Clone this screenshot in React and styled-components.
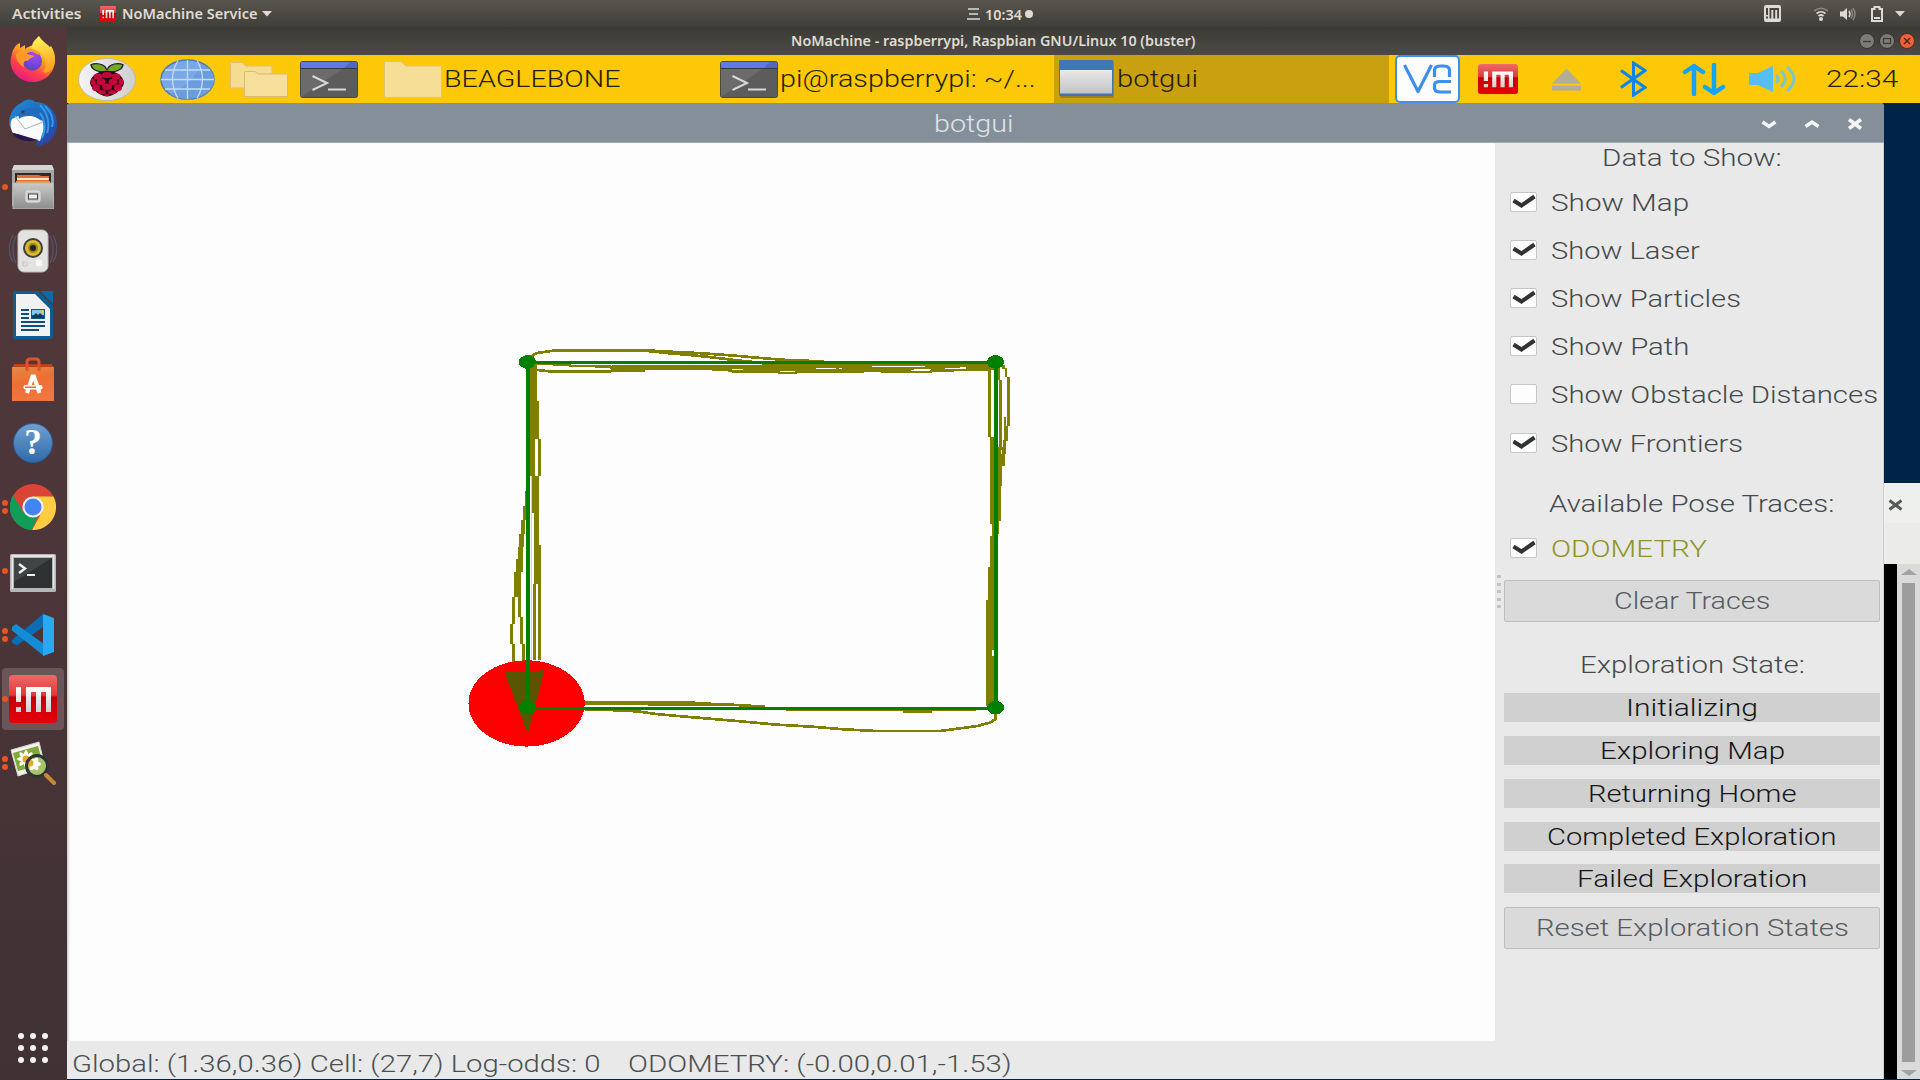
import React, { useLayoutEffect, useRef, useState } from "react";
import styled, { createGlobalStyle } from "styled-components";

const Global = createGlobalStyle`
  html, body { margin: 0; padding: 0; overflow: hidden; background: #00234a; }
  * { box-sizing: border-box; }
  svg { display: block; flex: none; }
`;

/* ---------- text stretched to the width of its slot ---------- */
const Slot = styled.span`
  display: block;
  flex: none;
  width: ${(p) => p.$w}px;
  margin-left: ${(p) => p.$ml || 0}px;
  text-align: left;
`;
const Glyphs = styled.span`
  display: inline-block;
  white-space: pre;
  transform-origin: 0 50%;
`;
function Fit({ w, ml, dy = 0, children }) {
  const ref = useRef(null);
  const [k, setK] = useState(1);
  useLayoutEffect(() => {
    const natural = ref.current.offsetWidth;
    if (natural) setK((w + 2) / natural);
  }, [w, children]);
  return (
    <Slot $w={w} $ml={ml}>
      <Glyphs ref={ref} style={{ transform: `translate(-1px, ${dy}px) scaleX(${k})` }}>{children}</Glyphs>
    </Slot>
  );
}

/* ---------- shell ---------- */
const Screen = styled.div`
  width: 1920px;
  height: 1080px;
  display: flex;
  flex-direction: column;
  overflow: hidden;
  font-family: Roboto, "Noto Sans", sans-serif;
`;
const TopBar = styled.header`
  height: 27px;
  flex: none;
  display: flex;
  align-items: center;
  background: linear-gradient(#59564d, #3f3e39);
  color: #dfdbd2;
  font: 600 14px/26px "Noto Sans", "Open Sans", sans-serif;
`;
const TopGroup = styled.div`
  display: flex;
  align-items: center;
  height: 26px;
  width: ${(p) => (p.$w ? p.$w + "px" : "auto")};
  padding-left: ${(p) => p.$pl || 0}px;
  margin-left: ${(p) => (p.$end ? "auto" : 0)};
  padding-right: ${(p) => (p.$end ? 15 : 0)}px;
`;
const Gap = styled.i`
  flex: none;
  width: ${(p) => p.$w}px;
`;
const Body = styled.div`
  flex: 1;
  display: flex;
  min-height: 0;
`;
const Dock = styled.nav`
  width: 67px;
  flex: none;
  display: flex;
  flex-direction: column;
  background: linear-gradient(#52383a, #4d363a 45%, #3f3134);
`;
const DockItem = styled.div`
  height: 64px;
  flex: none;
  display: flex;
  align-items: center;
`;
const Dots = styled.div`
  width: 8px;
  padding-left: 2px;
  display: flex;
  flex-direction: column;
  gap: 2.4px;
  z-index: 1;
`;
const Dot = styled.i`
  width: 6px;
  height: 6px;
  border-radius: 50%;
  background: #e95420;
`;
const Tile = styled.div`
  width: 62px;
  height: 62px;
  margin-left: -6px;
  border-radius: 4px;
  display: flex;
  align-items: center;
  justify-content: center;
  background: ${(p) => (p.$active ? "#6b5559" : "transparent")};
`;
const AppsGrid = styled.div`
  margin: auto 0 17px 18px;
  display: grid;
  grid-template-columns: repeat(3, 6px);
  gap: 6px;
`;
const AppsDot = styled.i`
  height: 6px;
  border-radius: 50%;
  background: #f4f2f0;
`;
const Remote = styled.div`
  flex: 1;
  display: flex;
  flex-direction: column;
  min-width: 0;
`;
const HostTitle = styled.div`
  height: 28px;
  flex: none;
  display: flex;
  align-items: center;
  padding-left: 725px;
  background: linear-gradient(#3b3a36, #4c4a44);
  color: #dfdbd2;
  font: 600 14px/27px "Noto Sans", "Open Sans", sans-serif;
`;
const HostButtons = styled.div`
  margin-left: auto;
  padding-right: 5px;
  display: flex;
  gap: 4px;
`;

/* ---------- remote desktop ---------- */
const Taskbar = styled.div`
  height: 48px;
  flex: none;
  display: flex;
  align-items: center;
  background: #fcc808;
  color: #241f04;
  font-size: 23.5px;
  line-height: 48px;
`;
const Task = styled.div`
  height: 48px;
  width: ${(p) => p.$w}px;
  flex: none;
  display: flex;
  align-items: center;
  padding-left: ${(p) => p.$pl}px;
  font-weight: 300;
  background: ${(p) => (p.$active ? "#c9a00f" : "transparent")};
`;
const Clock = styled.div`
  font-weight: 300;
`;
const Desktop = styled.div`
  flex: 1;
  display: flex;
  min-height: 0;
  border-bottom: 1px solid #00234a;
`;
const Window = styled.section`
  width: 1817px;
  flex: none;
  display: flex;
  flex-direction: column;
  background: #e9e9e9;
  border-radius: 4px 4px 0 0;
`;
const WindowTitle = styled.div`
  height: 40px;
  flex: none;
  display: flex;
  align-items: center;
  padding-left: 868px;
  padding-right: 21px;
  border-radius: 4px 4px 0 0;
  border-bottom: 1px solid #a3aab1;
  background: #858f99;
  color: #dfe3e7;
  font-size: 23px;
  font-weight: 300;
  line-height: 40px;
`;
const WindowButtons = styled.div`
  margin-left: auto;
  padding-top: 2px;
  display: flex;
  gap: 27px;
`;
const Main = styled.div`
  flex: 1;
  display: flex;
  min-height: 0;
`;
const View = styled.div`
  width: 1428px;
  flex: none;
  display: flex;
  flex-direction: column;
`;
const Canvas = styled.div`
  height: 898px;
  flex: none;
  overflow: hidden;
  background: #fdfdfd;
  box-shadow: inset 3px 0 3px -2px #bbb;
`;
const Status = styled.div`
  flex: 1;
  display: flex;
  padding-left: 6px;
  color: #4a5052;
  font-size: 23px;
  font-weight: 300;
  line-height: 46px;
`;
const Side = styled.aside`
  width: 389px;
  height: 936px;
  display: flex;
  border-right: 1px solid #d0d0d0;
`;
const Grip = styled.div`
  width: 9px;
  padding: 432px 0 0 2px;
  display: flex;
  flex-direction: column;
  gap: 4.5px;
`;
const GripDot = styled.i`
  width: 4px;
  height: 3px;
  background: #c4c4c4;
`;
const Controls = styled.div`
  width: 376px;
  display: flex;
  flex-direction: column;
  color: #43494c;
  font-size: 23px;
  font-weight: 300;
`;
const Heading = styled.div`
  height: 30px;
  flex: none;
  display: flex;
  justify-content: center;
  line-height: 30px;
  margin-top: ${(p) => p.$mt}px;
  margin-bottom: ${(p) => p.$mb}px;
`;
const CheckRow = styled.label`
  height: 48.1px;
  flex: none;
  display: flex;
  align-items: center;
  padding-left: 6px;
  line-height: 48px;
  color: ${(p) => p.$color || "inherit"};
`;
const Box = styled.span`
  width: 27px;
  height: 20px;
  margin-right: 15px;
  border: 1px solid #c6c6c6;
  border-radius: 2px;
  background: #fdfdfd;
`;
const Button = styled.button`
  height: 42px;
  flex: none;
  display: flex;
  justify-content: center;
  padding: 0;
  margin: ${(p) => p.$mt}px 0 0;
  border: 1px solid #bebebe;
  border-radius: 2px;
  background: #dadada;
  color: #555b5e;
  font: inherit;
  line-height: 41px;
`;
const StateList = styled.div`
  display: flex;
  flex-direction: column;
  gap: 13.6px;
`;
const StateBar = styled.div`
  height: 29.2px;
  display: flex;
  justify-content: center;
  background: #d0d0d0;
  color: #141618;
  line-height: 30px;
`;
const Behind = styled.div`
  flex: 1;
  display: flex;
  flex-direction: column;
  background: #00234a;
`;
const BehindTitle = styled.div`
  height: 40px;
  margin-top: 380px;
  flex: none;
  padding: 16px 0 0 4px;
  background: #eef0ee;
`;
const BehindMenu = styled.div`
  height: 41px;
  flex: none;
  background: #ebebea;
`;
const BehindTerm = styled.div`
  flex: 1;
  display: flex;
  justify-content: flex-end;
  background: #000;
`;
const ScrollBar = styled.div`
  width: 23px;
  display: flex;
  flex-direction: column;
  align-items: center;
  padding: 5px 0 3px;
  background: #dadada;
`;
const Thumb = styled.div`
  width: 13px;
  flex: 1;
  margin: 8px 0;
  background: #9d9d9d;
`;

/* ---------- icons ---------- */
const NMLogo = ({ w, h }) => (
  <svg width={w} height={h} viewBox="0 0 48 48" preserveAspectRatio="none">
    <defs>
      <linearGradient id="nm" x1="0" y1="0" x2="0" y2="1">
        <stop offset="0" stopColor="#ee6a68" /><stop offset=".42" stopColor="#de3a3a" />
        <stop offset=".46" stopColor="#c40006" /><stop offset="1" stopColor="#e80008" />
      </linearGradient>
      <linearGradient id="nmw" x1="0" y1="0" x2="0" y2="1">
        <stop offset="0" stopColor="#fff" /><stop offset="1" stopColor="#cfcfcf" />
      </linearGradient>
    </defs>
    <rect width="48" height="48" rx="4" fill="url(#nm)" />
    <path d="M7 12h5v15H7zM7 32h5v5H7zM17 12h25v25h-5V17h-5v20h-5V17h-5v20h-5z" fill="url(#nmw)" />
  </svg>
);
const Caret = ({ w = 10 }) => (
  <svg width={w} height="6" viewBox="0 0 10 6" preserveAspectRatio="none"><path d="M0 0H10L5 5.5Z" fill="#dfdbd2" /></svg>
);
const Firefox = () => (
  <svg width="46" height="46" viewBox="0 0 46 46">
    <defs>
      <linearGradient id="fx" x1=".8" y1=".1" x2=".25" y2="1">
        <stop offset="0" stopColor="#ffe845" /><stop offset=".35" stopColor="#ff9a22" />
        <stop offset=".65" stopColor="#ff3f4c" /><stop offset="1" stopColor="#e3158a" />
      </linearGradient>
      <radialGradient id="fp" cx=".6" cy=".2" r=".8"><stop offset="0" stopColor="#a34bf2" /><stop offset="1" stopColor="#5746c4" /></radialGradient>
      <linearGradient id="fy" x1=".5" y1="0" x2=".7" y2="1"><stop offset="0" stopColor="#fff255" /><stop offset="1" stopColor="#ff9a1e" /></linearGradient>
    </defs>
    <path d="M2 17C4 12 5 9 10 7V12L15 9V13C20 9 29 7 35 10C42 14 45 18 45 25C44 38 34 46 23 46C10 46 0 36 .5 24Z" fill="url(#fx)" />
    <path d="M23 0C26 5 37 8 40 11L41 10C45 16 46 23 44 29C42 36 36 38 33 36C38 30 36 19 30 16C24 15 21 13 22 10C22 6 25 3 29 0Z" fill="none" />
    <path d="M29 0C32 5 37 8 40 11L41 10C45 16 46 23 44 29C42 36 36 38 33 36C38 30 36 19 30 16C24 15 21 13 22 10C23 5 26 3 29 0Z" fill="url(#fy)" />
    <circle cx="22.5" cy="25" r="9.5" fill="url(#fp)" />
    <path d="M6 18C9 15 14 15 17 18C20 19 22 19 24 20C22 22 19 22 18 25C14 24 13 27 14 31C9 29 6 24 6 18Z" fill="#ff9a26" />
    <path d="M15 15C20 13 26 15 29 18" fill="none" stroke="#ff9a26" strokeWidth="3" />
  </svg>
);
const Thunderbird = () => (
  <svg width="48" height="48" viewBox="0 0 48 48">
    <defs><linearGradient id="tb" x1="0" y1="0" x2="1" y2="1"><stop offset="0" stopColor="#1c8fd8" /><stop offset=".6" stopColor="#205fba" /><stop offset="1" stopColor="#33379b" /></linearGradient></defs>
    <path d="M12 4C18-1 24 0 26 3C38 3 48 12 48 25C48 36 42 44 29 48L31 45L26 46L29 42C16 42 4 36 0 25C0 16 4 8 12 4Z" fill="url(#tb)" />
    <path d="M3 20L9 17L24 17L34 22L35 30L31 42L4 34C1 29 1 24 3 20Z" fill="#f9fafc" />
    <path d="M6 17L16 30L34 23" stroke="#aeb2b8" strokeWidth="1" fill="none" />
    <path d="M3 34C12 35 20 39 30 41C18 44 8 41 3 34Z" fill="#2a174e" />
    <path d="M10 20C8 13 15 9 21 9C27 8 31 13 34 14C30 15 30 17 33 23C30 19 26 17 20 17C15 17 12 18 10 20Z" fill="#236bc0" />
    <path d="M36 7C42 13 45 21 43 28M31 6C39 14 41 25 38 34M31 14C36 21 37 30 33 39" stroke="#2f9be4" strokeWidth="2" fill="none" />
    <circle cx="14" cy="13" r="1.7" fill="#5a3331" />
  </svg>
);
const Files = () => (
  <svg width="42" height="44" viewBox="0 0 42 44">
    <defs><linearGradient id="fi" x1="0" y1="0" x2="0" y2="1"><stop offset="0" stopColor="#c9c9c9" /><stop offset="1" stopColor="#8d8d8d" /></linearGradient></defs>
    <path d="M2 0H40L42 5V41H0V5Z" fill="#a5a5a5" /><path d="M2 0H40L42 5H0Z" fill="#d5d5d5" />
    <rect x="3" y="8" width="36" height="11" fill="#2e2a29" />
    <path d="M5 10H27L29 11H37V17H5Z" fill="#e5702b" /><path d="M5 13H37V15H5Z" fill="#f3e1cb" /><rect x="4" y="16" width="34" height="3" fill="#ef8f3d" />
    <path d="M1 18H41L42 44H1Z" fill="url(#fi)" stroke="#b9b9b9" />
    <rect x="14" y="26" width="14" height="11" rx="2" fill="#c9c9c9" stroke="#e8e8e8" />
    <rect x="16.5" y="29" width="9" height="5" fill="#eee" stroke="#444" />
  </svg>
);
const Speaker = () => (
  <svg width="48" height="48" viewBox="0 0 48 48">
    <g fill="none" stroke="#5b6688" strokeWidth="1.3" opacity=".6"><path d="M7 9C3 17 3 29 7 36M4 8C-1 18-1 27 4 35M41 9C45 17 45 29 41 36M44 8C49 18 49 27 44 35" /></g>
    <rect x="9" y="3" width="30" height="42" rx="6" fill="#e2e2e1" stroke="#bdbdbd" />
    <circle cx="24" cy="21" r="10" fill="#3b3d3f" /><circle cx="24" cy="21" r="8" fill="#d9b92b" /><circle cx="24" cy="21" r="5" fill="#9b8420" /><circle cx="24" cy="21" r="3" fill="#222" />
    <circle cx="30" cy="36" r="3.5" fill="#f7f7f7" /><path d="M14 35H18V39H14Z" fill="none" stroke="#c6c6c6" />
  </svg>
);
const Writer = () => (
  <svg width="40" height="48" viewBox="0 0 40 48">
    <path d="M2 0H25L40 15V46Q40 48 38 48H2Q0 48 0 46V2Q0 0 2 0Z" fill="#0e5c92" />
    <path d="M3 3H22L37 18V45H3Z" fill="#f2f2f2" /><path d="M27 0H40V13Z" fill="#0b6aa8" />
    <path d="M8 19H16M8 23H16M8 27H16M8 31H32M8 35H32M8 39H26" stroke="#0e4f80" strokeWidth="2" />
    <rect x="18" y="18" width="14" height="10" fill="#0e5c92" /><rect x="19" y="19" width="12" height="5" fill="#7ec7f0" />
    <path d="M19 26L23 22L25 24L27 22L31 26V27H19Z" fill="#173a51" /><circle cx="29" cy="20.5" r="1.5" fill="#f5c93e" />
  </svg>
);
const Software = () => (
  <svg width="42" height="44" viewBox="0 0 42 44">
    <defs><linearGradient id="sw" x1="0" y1="0" x2=".3" y2="1"><stop offset="0" stopColor="#e28a48" /><stop offset=".5" stopColor="#ee6f33" /><stop offset="1" stopColor="#f0763f" /></linearGradient></defs>
    <path d="M2 7H40L42 12H0Z" fill="#b9431d" /><rect y="10" width="42" height="34" fill="url(#sw)" />
    <path d="M15 14V5Q15 2 18 2H24Q27 2 27 5V14" fill="none" stroke="#df5427" strokeWidth="3" />
    <path d="M15 36L20.5 19.500H22L27.500 36" fill="none" stroke="#fff" strokeWidth="4" /><rect x="11.500" y="28" width="19" height="4.500" rx="2" fill="#fff" /><rect x="13" y="29.500" width="11" height="1.500" fill="#ec6a33" />
  </svg>
);
const HelpBall = styled.div`
  width: 40px;
  height: 40px;
  border-radius: 50%;
  background: linear-gradient(#6f9fd0, #2f6bab);
  border: 1px solid #2c5f98;
  color: #fff;
  text-align: center;
  font: 700 35px/38px "Liberation Serif", serif;
`;
const Chrome = () => (
  <svg width="46" height="46" viewBox="0 0 46 46">
    <circle cx="23" cy="23" r="23" fill="#da4437" />
    <path d="M23 12.500H43.500A23 23 0 0 1 22 46L32 28Z" fill="#ffcd40" />
    <path d="M3 11.500L13.500 28.500L23 33.500L28 31L22 46A23 23 0 0 1 3 11.500Z" fill="#0f9d58" />
    <circle cx="23" cy="23" r="10.500" fill="#f1f1f1" /><circle cx="23" cy="23" r="8.500" fill="#4384f4" />
  </svg>
);
const Terminal = () => (
  <svg width="46" height="42" viewBox="0 -4 46 42">
    <rect width="46" height="38" rx="1.500" fill="#b7b7b7" /><rect x="1.500" y="1" width="43" height="34" fill="#e4e4e4" /><rect x="3" y="3" width="40" height="32" fill="#b5b5b5" />
    <rect x="4" y="4" width="38" height="30" fill="#2f3232" /><path d="M4 4H42L4 28Z" fill="#414444" />
    <path d="M9 10L15 14.500L9 19" fill="none" stroke="#eee" strokeWidth="2.500" /><path d="M17 21H25" stroke="#eee" strokeWidth="2" />
  </svg>
);
const VSCode = () => (
  <svg width="42" height="42" viewBox="0 0 42 42">
    <path d="M31 0V13L5 31.500L0 28.500V26Z" fill="#0b6db5" /><path d="M0 13L4 10L32 30V42L0 16.500Z" fill="#168bd6" />
    <path d="M31 0L42 4V38L31 42Z" fill="#2aa9f2" />
  </svg>
);
const Viewer = () => (
  <svg width="46" height="46" viewBox="0 0 46 46">
    <path d="M1 10L29 2L35 27L8 36Z" fill="#f1f1ee" stroke="#d5d5cf" /><path d="M3 13L28 6L33 24L8 31Z" fill="#82a83a" />
    {[0, 45, 90, 135].map((a) => <ellipse key={a} cx="16" cy="19" rx="9" ry="2.600" fill="#fff" transform={`rotate(${a} 16 19)`} />)}
    <circle cx="16" cy="19" r="3.500" fill="#e8a71c" />
    <circle cx="27" cy="26" r="10.500" fill="#a9c466" />
    {[0, 60, 120].map((a) => <ellipse key={a} cx="24" cy="24" rx="7" ry="3" fill="#fff" transform={`rotate(${a} 24 24)`} />)}
    <circle cx="20" cy="23" r="3.500" fill="#e2a92c" />
    <circle cx="27" cy="26" r="10.500" fill="none" stroke="#2e3436" strokeWidth="3" />
    <path d="M36 35L44 43" stroke="#c58a36" strokeWidth="4" strokeLinecap="round" />
  </svg>
);
const Raspberry = () => (
  <svg width="58" height="43" viewBox="0 0 58 58" preserveAspectRatio="none">
    <defs><linearGradient id="rb"><stop offset="0" stopColor="#f4f4f4" /><stop offset="1" stopColor="#cfcfcf" /></linearGradient></defs>
    <ellipse cx="29" cy="29" rx="28.500" ry="28.500" fill="url(#rb)" stroke="#b9b6a4" />
    <path d="M13 9C18 6 26 8 28 14L29 16L30 14C32 8 40 6 45 9C44 17 36 20 30 18L29 20L28 18C22 20 14 17 13 9Z" fill="#75a928" stroke="#222" strokeWidth="1.500" />
    <path d="M29 18C38 17 45 24 46 33C46 40 37 51 29 52C21 51 12 40 12 33C13 24 20 17 29 18Z" fill="#26060f" />
    {[[29, 23, 5, 4], [20, 25, 4.5, 4], [38, 25, 4.500, 4], [15, 32, 2.500, 4.500], [43, 32, 2.500, 4.500], [23, 32, 4.500, 4.500], [35, 32, 4.500, 4.500], [29, 39, 5, 4.500], [18, 40, 4, 4.500], [40, 40, 4, 4.500], [24, 46, 4, 3], [34, 46, 4, 3], [29, 50, 3, 1.500]].map(([x, y, a, b], i) => <ellipse key={i} cx={x} cy={y} rx={a} ry={b} fill="#c7053d" />)}
  </svg>
);
const Globe = () => (
  <svg width="55" height="41" viewBox="0 0 55 41">
    <ellipse cx="27.500" cy="20.500" rx="26.500" ry="19.500" fill="#78a8e6" stroke="#4c7cbb" strokeWidth="1.500" />
    <path d="M54 20A26.500 19.500 0 0 1 10 35Q32 25 42 5Q54 11 54 20Z" fill="#6a9cde" />
    <path d="M27.500 1V40M1 20.500H54M5 11H50M5 30H50M18 1.500Q7 20 18 39.500M37 1.500Q48 20 37 39.500" fill="none" stroke="#c3dbf7" strokeWidth="1.300" />
  </svg>
);
const Folders = () => (
  <svg width="58" height="35" viewBox="0 0 58 35">
    <path d="M.5.500H12L16 4H42V26H.5Z" fill="#f4dc90" stroke="#dcc07e" />
    <path d="M14.500 9.500H25L28 12H57.500V34.500H14.500Z" fill="#f6df9b" stroke="#d8bb78" />
  </svg>
);
const Folder = () => (
  <svg width="58" height="37" viewBox="0 0 58 37"><path d="M.5.500H17L22 5H57.500V36.500H.5Z" fill="#f6de96" stroke="#e0c27a" /></svg>
);
const LxTerm = () => (
  <svg width="58" height="37" viewBox="0 0 58 37">
    <rect x=".5" y=".5" width="57" height="36" rx="2" fill="#5c5c5c" stroke="#4b4840" />
    <path d="M1 7H44L1 36Z" fill="#6b6b6b" /><rect x="1" y="1" width="56" height="6" fill="#6079e4" /><path d="M50 1H57V7H44Z" fill="#5265c0" /><path d="M1 7.500H57" stroke="#353744" />
    <path d="M12.500 15L27 22L12.500 29" fill="none" stroke="#d9d9d9" strokeWidth="2" /><path d="M28 28.500H46" stroke="#d9d9d9" strokeWidth="2" />
  </svg>
);
const WinIcon = () => (
  <svg width="55" height="38" viewBox="0 0 55 38">
    <defs><linearGradient id="wi" x1="0" y1="0" x2="0" y2="1"><stop offset="0" stopColor="#e9e9e9" /><stop offset="1" stopColor="#c4c4c4" /></linearGradient></defs>
    <rect x="1" y="1" width="54" height="37" rx="2" fill="#7d6c2a" opacity=".6" /><rect width="54" height="36" rx="1" fill="#4274b8" /><rect x="1" y="10" width="52" height="23.500" fill="url(#wi)" />
  </svg>
);
const Vnc = () => (
  <svg width="65" height="48" viewBox="0 0 65 48">
    <rect x="1" y="1" width="63" height="46" rx="4" fill="#fdfdfe" stroke="#3c8ef0" strokeWidth="2" />
    <g fill="none" stroke="#3c8ef0" strokeWidth="3.200" strokeLinejoin="round"><path d="M9.500 10L23 36.500L36.500 10" /><path d="M39.500 22V15.500Q39.500 11 45 11H49Q54.500 11 54.500 15.500V22" /><path d="M56 26.500H45Q39.500 26.500 39.500 30V33Q39.500 37 45 37H56" /></g>
  </svg>
);

/* ---------- plot: [x, y, width, height] runs and polylines of the robot trace ---------- */
const RUNS = [
  [214, 512, 6, 44], [210, 556, 9, 44], [206, 600, 9, 40], [201, 640, 12, 40], [197, 680, 14, 35], [192, 715, 18, 40], [187, 755, 19, 75],
  [183, 830, 7, 80], [178, 910, 7, 60], [183, 970, 7, 55], [197, 830, 7, 60], [202, 890, 7, 80], [207, 970, 7, 55],
  [225, 130, 21, 113], [225, 243, 25, 112], [225, 355, 16, 113], [247, 355, 8, 113], [233, 468, 18, 110], [237, 578, 14, 97],
  [237, 675, 18, 115], [234, 790, 8, 230], [247, 790, 8, 230],
  [1387, 145, 7, 205], [1391, 350, 11, 262], [1395, 612, 7, 36], [1391, 648, 11, 92], [1387, 740, 15, 100], [1382, 840, 20, 318],
  [1320, 130, 82, 20], [1407, 140, 10, 40], [1407, 180, 4, 25], [1415, 178, 7, 205], [1408, 380, 15, 57], [1408, 437, 14, 60], [1408, 497, 10, 104], [1408, 601, 5, 40],
  [1422, 134, 8, 12], [1428, 144, 7, 27], [1434, 170, 7, 148], [1430, 318, 7, 44], [1426, 290, 6, 72], [1423, 360, 8, 42], [1420, 400, 8, 37],
  [366, 1142, 280, 11], [525, 1152, 193, 6], [875, 1164, 480, 9], [1170, 1170, 74, 9], [366, 1163, 140, 8],
];
const LINES = [
  "228,110 245,98 270,94 300,89 450,91 525,92 580,99 640,105 680,110 750,120 800,126",
  "290,90 450,90 525,90 560,93 650,98 710,103 755,107 800,112 860,118 940,122 1000,127",
  "225,131 325,132 330,137 430,138 434,144 550,146 600,140 668,138 810,138 950,138 1010,141",
  "245,149 285,154 430,154 435,150 515,150 520,143 665,145 735,150 740,153 855,154 860,158 900,158 905,153 1070,153 1075,150 1200,146",
  "815,131 950,133 1320,132", "670,137 790,143 940,149 1115,150 1120,155 1240,155 1245,150 1390,149",
  "900,136 1050,142 1190,144 1320,139", "434,138 680,139 830,147 980,149 1190,149",
  "645,1149 718,1152 822,1159", "366,1168 455,1170 505,1174 545,1181 600,1187 680,1195 750,1202 850,1213 940,1219 1020,1227 1100,1232 1265,1232 1310,1225 1360,1217 1390,1207 1405,1197 1405,1165",
];
const NODES = [[221, 125], [1405, 125], [1405, 1162], [221, 1162]];
const Plot = () => (
  <svg width="1428" height="898">
    <g transform="translate(373 177.3) scale(.3954 .33333)" shapeRendering="crispEdges">
      <g fill="#808000">{RUNS.map(([x, y, w, h], i) => <rect key={i} x={x} y={y} width={w} height={h} />)}</g>
      <g fill="none" stroke="#808000" strokeWidth="8">{LINES.map((p) => <polyline key={p} points={p} />)}</g>
      <path d="M1395 990h5v16h-5zM1418 390h4v12h-4zM1316 141h14v5h-14z" fill="#fdfdfd" />
      <path d="M230 468h3v550h-3z" fill="#cfd6c4" />
      <ellipse cx="219" cy="1149.500" rx="147" ry="129.500" fill="#f00" />
      <path d="M163 1056L264 1050L222 1240Z" fill="#5a5500" />
      <g fill="#008000">
        <path d="M218 125h9v1038h-9zM1401 125h9v1038h-9zM221 121h1184v9H221zM221 1159h1184v9H221z" />
        {NODES.map(([x, y]) => <ellipse key={x + "-" + y} cx={x} cy={y} rx="21.500" ry="20.500" />)}
      </g>
    </g>
  </svg>
);

const CheckBox = ({ on }) => (
  <Box>{on && <svg width="25" height="18" viewBox="0 0 25 18"><path d="M2.500 7.500L10.500 12.500L23.500 3.500" fill="none" stroke="#2f3334" strokeWidth="4" /></svg>}</Box>
);

const DOCK = [
  [Firefox, 0], [Thunderbird, 0], [Files, 1], [Speaker, 0], [Writer, 0], [Software, 0],
  [() => <HelpBall>?</HelpBall>, 0], [Chrome, 2], [Terminal, 1], [VSCode, 2], [() => <NMLogo w={48} h={48} />, 1, true], [Viewer, 2],
];
const CHECKS = [
  ["Show Map", 136, true], ["Show Laser", 147, true], ["Show Particles", 188, true],
  ["Show Path", 137, true], ["Show Obstacle Distances", 325, false], ["Show Frontiers", 190.5, true],
];
const STATES = [["Initializing", 130], ["Exploring Map", 183], ["Returning Home", 207], ["Completed Exploration", 288], ["Failed Exploration", 228]];

export default function App() {
  return (
    <Screen>
      <Global />
      <TopBar>
        <TopGroup $w={967} $pl={13}>
          <Fit w={67}>Activities</Fit><Gap $w={20} /><NMLogo w={16} h={16} />
          <Fit w={133} ml={7}>NoMachine Service</Fit><Gap $w={6} /><Caret />
        </TopGroup>
        <TopGroup>
          <svg width="13" height="12"><path d="M1 1H12M2 6H11M0 11H13" stroke="#dfdbd2" strokeWidth="1.500" /></svg>
          <Fit w={35} ml={6} dy={1}>10:34</Fit><Gap $w={4} />
          <svg width="8" height="8"><circle cx="4" cy="4" r="4" fill="#dfdbd2" /></svg>
        </TopGroup>
        <TopGroup $end>
          <svg width="17" height="17" viewBox="0 0 17 17"><rect width="17" height="17" rx="2" fill="#dfdbd2" /><path d="M2 3h2v7H2zM2 11.500h2v2H2zM5.500 3H15v10.500h-1.800V5h-2v8.500H9.300V5h-2v8.500H5.500z" fill="#45433e" /></svg>
          <Gap $w={33} />
          <svg width="14" height="14" viewBox="0 0 14 14" fill="none" strokeWidth="1.700"><path d="M0 4Q7-1.500 14 4" stroke="#8a877f" /><path d="M2.500 6.500Q7 3 11.500 6.500M4.500 9Q7 7 9.500 9" stroke="#dfdbd2" /><circle cx="7" cy="12" r="2" fill="#dfdbd2" /></svg>
          <Gap $w={12} />
          <svg width="16" height="14" viewBox="0 0 16 14"><path d="M0 4.500H3L7 1V13L3 9.500H0Z" fill="#dfdbd2" /><path d="M9 4Q11 7 9 10" stroke="#dfdbd2" strokeWidth="1.500" fill="none" /><path d="M11 2.500Q14 7 11 11.500M13 1Q17 7 13 13" stroke="#8a877f" strokeWidth="1.500" fill="none" /></svg>
          <Gap $w={15} />
          <svg width="12" height="16" viewBox="0 0 12 16"><path d="M1 3H3.500V1H8.500V3H11V15H1Z" fill="none" stroke="#dfdbd2" strokeWidth="2" /><path d="M3 12H9" stroke="#dfdbd2" strokeWidth="2" /></svg>
          <Gap $w={12} /><Caret />
        </TopGroup>
      </TopBar>

      <Body>
        <Dock>
          {DOCK.map(([Icon, dots, active], i) => (
            <DockItem key={i}>
              <Dots>{Array.from({ length: dots }, (_, n) => <Dot key={n} />)}</Dots>
              <Tile $active={active}><Icon /></Tile>
            </DockItem>
          ))}
          <AppsGrid>{Array.from({ length: 9 }, (_, n) => <AppsDot key={n} />)}</AppsGrid>
        </Dock>

        <Remote>
          <HostTitle>
            <Fit w={402} dy={-1}>NoMachine - raspberrypi, Raspbian GNU/Linux 10 (buster)</Fit>
            <HostButtons>
              <svg width="16" height="16"><circle cx="8" cy="8" r="7.500" fill="#7d7b74" stroke="#34332f" /><path d="M4 8.500H12" stroke="#3b3a36" strokeWidth="1.300" /></svg>
              <svg width="16" height="16"><circle cx="8" cy="8" r="7.500" fill="#7d7b74" stroke="#34332f" /><rect x="4.500" y="5.500" width="7" height="5" fill="none" stroke="#3b3a36" strokeWidth="1.200" /></svg>
              <svg width="16" height="16"><circle cx="8" cy="8" r="7.500" fill="#ee6038" stroke="#5c2b1c" /><path d="M5 5L11 11M11 5L5 11" stroke="#4a2517" strokeWidth="1.400" /></svg>
            </HostButtons>
          </HostTitle>

          <Taskbar>
            <Gap $w={11} /><Raspberry /><Gap $w={24} /><Globe /><Gap $w={15} /><Folders /><Gap $w={12} /><LxTerm />
            <Gap $w={26} />
            <Task $w={336} $pl={0}><Folder /><Fit w={175} ml={2.5}>BEAGLEBONE</Fit></Task>
            <Task $w={333.500} $pl={0}><LxTerm /><Fit w={253} ml={2.5}>pi@raspberrypi: ~/...</Fit></Task>
            <Task $w={335} $pl={5} $active><WinIcon /><Fit w={79} ml={4}>botgui</Fit></Task>
            <Gap $w={6.5} /><Vnc /><Gap $w={18} /><NMLogo w={40} h={30} /><Gap $w={33.5} />
            <svg width="29" height="23" viewBox="0 0 30 23"><path d="M15 0L30 16H0ZM0 18H30V23H0Z" fill="#b4ac98" /></svg><Gap $w={39} />
            <svg width="27" height="36" viewBox="0 0 27 36"><path d="M1 9.500L25 26.500L13.500 34V2L25 9.500L1 26.500" fill="none" stroke="#0d84ea" strokeWidth="3" /></svg><Gap $w={35} />
            <svg width="44" height="33" viewBox="0 0 44 33" fill="none" stroke="#14a3f5" strokeWidth="4.500" strokeLinecap="round" strokeLinejoin="round"><path d="M12 31V3M3 9L12 3L21 9M32 2V30M23 24L32 30L41 24" /></svg><Gap $w={23.5} />
            <svg width="48" height="26" viewBox="0 0 48 26"><path d="M0 7H9L24 0V26L9 19H0Z" fill="#56bdf5" /><path d="M27 9Q31 13 27 17M32 5Q40 13 32 21M38 1Q52 13 38 25" fill="none" stroke="#7cc5ce" strokeWidth="3" /></svg><Gap $w={29.500} />
            <Clock><Fit w={70}>22:34</Fit></Clock>
          </Taskbar>

          <Desktop>
            <Window>
              <WindowTitle>
                <Fit w={78} dy={2}>botgui</Fit>
                <WindowButtons>
                  <svg width="16" height="12"><path d="M1.500 4L8 8.500L14.500 4" fill="none" stroke="#f4f5f6" strokeWidth="3.400" /></svg>
                  <svg width="16" height="12"><path d="M1.500 8.500L8 4L14.500 8.500" fill="none" stroke="#f4f5f6" strokeWidth="3.400" /></svg>
                  <svg width="16" height="12"><path d="M2 1.500L14 10.500M14 1.500L2 10.500" stroke="#f4f5f6" strokeWidth="3.600" /></svg>
                </WindowButtons>
              </WindowTitle>
              <Main>
                <View>
                  <Canvas><Plot /></Canvas>
                  <Status>
                    <Fit w={526} dy={1}>Global: (1.36,0.36) Cell: (27,7) Log-odds: 0</Fit>
                    <Fit w={382} ml={30} dy={1}>ODOMETRY: (-0.00,0.01,-1.53)</Fit>
                  </Status>
                </View>
                <Side>
                  <Grip>{[0, 1, 2, 3, 4].map((n) => <GripDot key={n} />)}</Grip>
                  <Controls>
                    <Heading $mt={0} $mb={5}><Fit w={178} dy={1}>Data to Show:</Fit></Heading>
                    {CHECKS.map(([t, w, on]) => <CheckRow key={t}><CheckBox on={on} /><Fit w={w} dy={2}>{t}</Fit></CheckRow>)}
                    <Heading $mt={22} $mb={5.5}><Fit w={284} dy={1}>Available Pose Traces:</Fit></Heading>
                    <CheckRow $color="#8f9426"><CheckBox on /><Fit w={154} dy={2}>ODOMETRY</Fit></CheckRow>
                    <Button $mt={8}><Fit w={154}>Clear Traces</Fit></Button>
                    <Heading $mt={28} $mb={13}><Fit w={223} dy={1}>Exploration State:</Fit></Heading>
                    <StateList>{STATES.map(([t, w]) => <StateBar key={t}><Fit w={w} dy={0.7}>{t}</Fit></StateBar>)}</StateList>
                    <Button $mt={13.5}><Fit w={311}>Reset Exploration States</Fit></Button>
                  </Controls>
                </Side>
              </Main>
            </Window>
            <Behind>
              <BehindTitle><svg width="15" height="12"><path d="M1.500 1.500L13.500 10.500M13.500 1.500L1.500 10.500" stroke="#5a5a5a" strokeWidth="3" /></svg></BehindTitle>
              <BehindMenu />
              <BehindTerm>
                <ScrollBar>
                  <svg width="16" height="6"><path d="M0 6L8 0L16 6Z" fill="#a3a3a3" /></svg>
                  <Thumb />
                  <svg width="16" height="6"><path d="M0 0L8 6L16 0Z" fill="#a3a3a3" /></svg>
                </ScrollBar>
              </BehindTerm>
            </Behind>
          </Desktop>
        </Remote>
      </Body>
    </Screen>
  );
}
